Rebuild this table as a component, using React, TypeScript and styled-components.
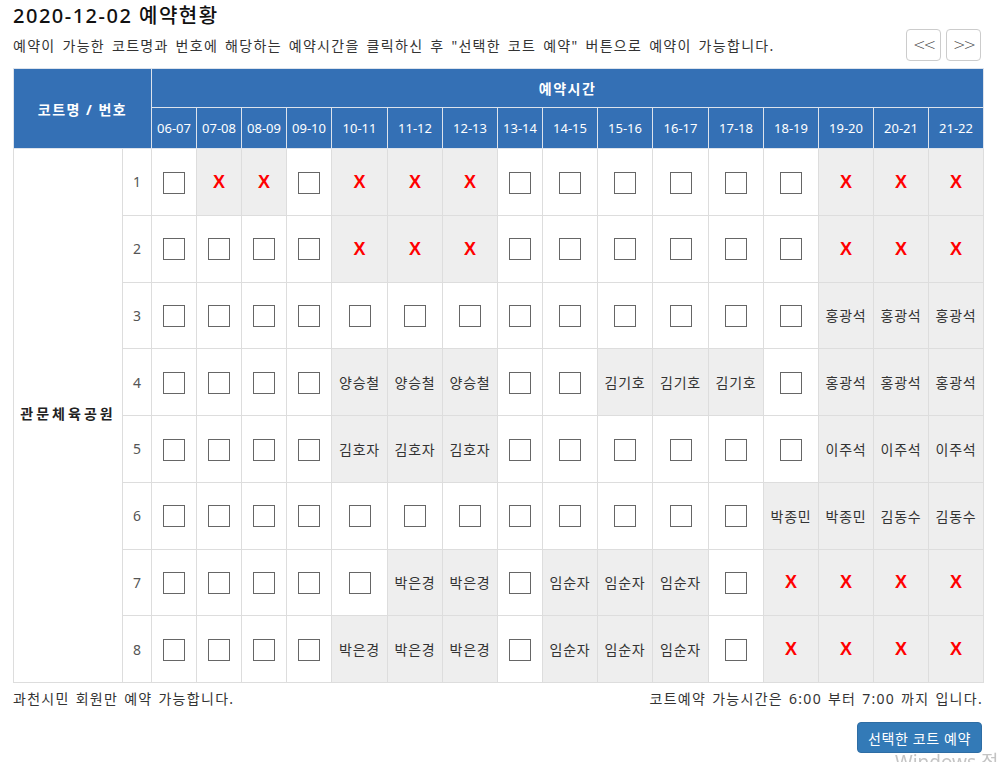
import React from "react";
import styled, { createGlobalStyle } from "styled-components";

const GlobalStyle = createGlobalStyle`
  body {
    margin: 0;
    background: #fff;
    color: #333;
    font-family: "Noto Sans", "Noto Sans CJK KR", sans-serif;
  }
`;

const Page = styled.div`
  width: 970px;
  padding: 0 15px 0 13px;
`;

const Title = styled.h1`
  margin: 0;
  padding-top: 3px;
  height: 26px;
  font-size: 20px;
  line-height: 26px;
  font-weight: 500;
  letter-spacing: 1.5px;
  color: #111;
`;

const InfoRow = styled.div`
  display: flex;
  align-items: center;
  justify-content: space-between;
  height: 32px;
`;

const Info = styled.p`
  margin: 0;
  font-size: 14px;
  letter-spacing: 1.3px;
  word-spacing: 2px;
  color: #333;
`;

const NavGroup = styled.div`
  display: flex;
  gap: 5px;
  margin-right: 2px;
`;

const NavButton = styled.button`
  width: 35px;
  height: 32px;
  padding: 0;
  border: 1px solid #ccc;
  border-radius: 4px;
  background: #fff;
  color: #444;
  font-family: "DejaVu Sans", sans-serif;
  font-size: 15px;
  font-weight: 200;
  letter-spacing: -2px;
`;

const Table = styled.table`
  margin-top: 7px;
  width: 970px;
  table-layout: fixed;
  border-collapse: collapse;
  border: 1px solid #ddd;
`;

const Col = styled.col<{ $w: number }>`
  width: ${(p) => p.$w}px;
`;

const HeadCell = styled.th<{ $h: number }>`
  height: ${(p) => p.$h}px;
  padding: 0;
  border: 1px solid #dde3ec;
  background: #3470b5;
  color: #fff;
  font-size: 14px;
  font-weight: 700;
  letter-spacing: 1.5px;
  text-align: center;
`;

const TimeCell = styled(HeadCell)`
  font-size: 13px;
  font-weight: 400;
  letter-spacing: 0;
`;

const BodyRow = styled.tr`
  height: 66.75px;
`;

const CourtCell = styled.td`
  padding: 0 0 6px;
  border: 1px solid #ddd;
  font-size: 14px;
  font-weight: 700;
  letter-spacing: 3px;
  color: #222;
  text-align: center;
`;

const NumCell = styled.td`
  padding: 0;
  border: 1px solid #ddd;
  font-size: 14px;
  color: #555;
  text-align: center;
`;

const SlotCell = styled.td<{ $busy: boolean }>`
  padding: 0;
  border: 1px solid #ddd;
  background: ${(p) => (p.$busy ? "#eeeeee" : "#fff")};
  text-align: center;
  vertical-align: middle;
`;

const Checkbox = styled.span`
  display: inline-block;
  width: 22px;
  height: 22px;
  box-sizing: border-box;
  border: 1px solid #666;
  background: #fff;
  vertical-align: middle;
  cursor: pointer;
`;

const XMark = styled.span`
  font-family: "Liberation Sans", Arial, sans-serif;
  font-size: 18px;
  font-weight: 700;
  color: #ff0000;
`;

const Name = styled.span`
  font-size: 14px;
  letter-spacing: 0.8px;
  color: #333;
`;

const NoteRow = styled.div`
  display: flex;
  justify-content: space-between;
  margin-top: 5px;
  font-size: 14px;
  line-height: 22px;
  letter-spacing: 1.3px;
  word-spacing: 1px;
  color: #333;
`;

const ActionRow = styled.div`
  display: flex;
  justify-content: flex-end;
  margin-top: 12px;
  padding-right: 1px;
`;

const ReserveButton = styled.button`
  width: 125px;
  height: 31px;
  padding: 0;
  border: 1px solid #2e6da4;
  border-radius: 4px;
  background: #337ab7;
  color: #fff;
  font-family: "Noto Sans", "Noto Sans CJK KR", sans-serif;
  font-size: 14px;
  letter-spacing: 0.6px;
`;

const Watermark = styled.div`
  position: fixed;
  left: 895px;
  top: 747px;
  font-family: "Noto Sans", "Noto Sans CJK KR", sans-serif;
  font-size: 19px;
  color: #c4c4c4;
  white-space: nowrap;
  pointer-events: none;
`;

const times = [
  "06-07", "07-08", "08-09", "09-10", "10-11", "11-12", "12-13", "13-14",
  "14-15", "15-16", "16-17", "17-18", "18-19", "19-20", "20-21", "21-22",
];

const widths = [45, 45, 45, 45, 56, 55, 55, 45, 55, 55, 56, 55, 55, 55, 55, 55];

// "o" = 예약 가능, "x" = 불가, 그 외 = 예약자 이름
const grid: string[][] = [
  ["o", "x", "x", "o", "x", "x", "x", "o", "o", "o", "o", "o", "o", "x", "x", "x"],
  ["o", "o", "o", "o", "x", "x", "x", "o", "o", "o", "o", "o", "o", "x", "x", "x"],
  ["o", "o", "o", "o", "o", "o", "o", "o", "o", "o", "o", "o", "o", "홍광석", "홍광석", "홍광석"],
  ["o", "o", "o", "o", "양승철", "양승철", "양승철", "o", "o", "김기호", "김기호", "김기호", "o", "홍광석", "홍광석", "홍광석"],
  ["o", "o", "o", "o", "김호자", "김호자", "김호자", "o", "o", "o", "o", "o", "o", "이주석", "이주석", "이주석"],
  ["o", "o", "o", "o", "o", "o", "o", "o", "o", "o", "o", "o", "박종민", "박종민", "김동수", "김동수"],
  ["o", "o", "o", "o", "o", "박은경", "박은경", "o", "임순자", "임순자", "임순자", "o", "x", "x", "x", "x"],
  ["o", "o", "o", "o", "박은경", "박은경", "박은경", "o", "임순자", "임순자", "임순자", "o", "x", "x", "x", "x"],
];

const Slot = ({ value }: { value: string }) => {
  if (value === "o") {
    return (
      <SlotCell $busy={false}>
        <Checkbox />
      </SlotCell>
    );
  }
  return (
    <SlotCell $busy>
      {value === "x" ? <XMark>X</XMark> : <Name>{value}</Name>}
    </SlotCell>
  );
};

export default function App() {
  return (
    <>
      <GlobalStyle />
      <Page>
        <Title>2020-12-02 예약현황</Title>
        <InfoRow>
          <Info>
            예약이 가능한 코트명과 번호에 해당하는 예약시간을 클릭하신 후 "선택한 코트 예약" 버튼으로
            예약이 가능합니다.
          </Info>
          <NavGroup>
            <NavButton>&lt;&lt;</NavButton>
            <NavButton>&gt;&gt;</NavButton>
          </NavGroup>
        </InfoRow>
        <Table>
          <colgroup>
            <Col $w={109} />
            <Col $w={29} />
            {widths.map((w, i) => (
              <Col key={i} $w={w} />
            ))}
          </colgroup>
          <thead>
            <tr>
              <HeadCell $h={38} colSpan={2} rowSpan={2}>
                코트명 / 번호
              </HeadCell>
              <HeadCell $h={38} colSpan={16}>
                예약시간
              </HeadCell>
            </tr>
            <tr>
              {times.map((t) => (
                <TimeCell key={t} $h={40}>
                  {t}
                </TimeCell>
              ))}
            </tr>
          </thead>
          <tbody>
            {grid.map((row, r) => (
              <BodyRow key={r}>
                {r === 0 && <CourtCell rowSpan={8}>관문체육공원</CourtCell>}
                <NumCell>{r + 1}</NumCell>
                {row.map((v, c) => (
                  <Slot key={c} value={v} />
                ))}
              </BodyRow>
            ))}
          </tbody>
        </Table>
        <NoteRow>
          <span>과천시민 회원만 예약 가능합니다.</span>
          <span>코트예약 가능시간은 6:00 부터 7:00 까지 입니다.</span>
        </NoteRow>
        <ActionRow>
          <ReserveButton>선택한 코트 예약</ReserveButton>
        </ActionRow>
      </Page>
      <Watermark>Windows 정품 인증</Watermark>
    </>
  );
}
